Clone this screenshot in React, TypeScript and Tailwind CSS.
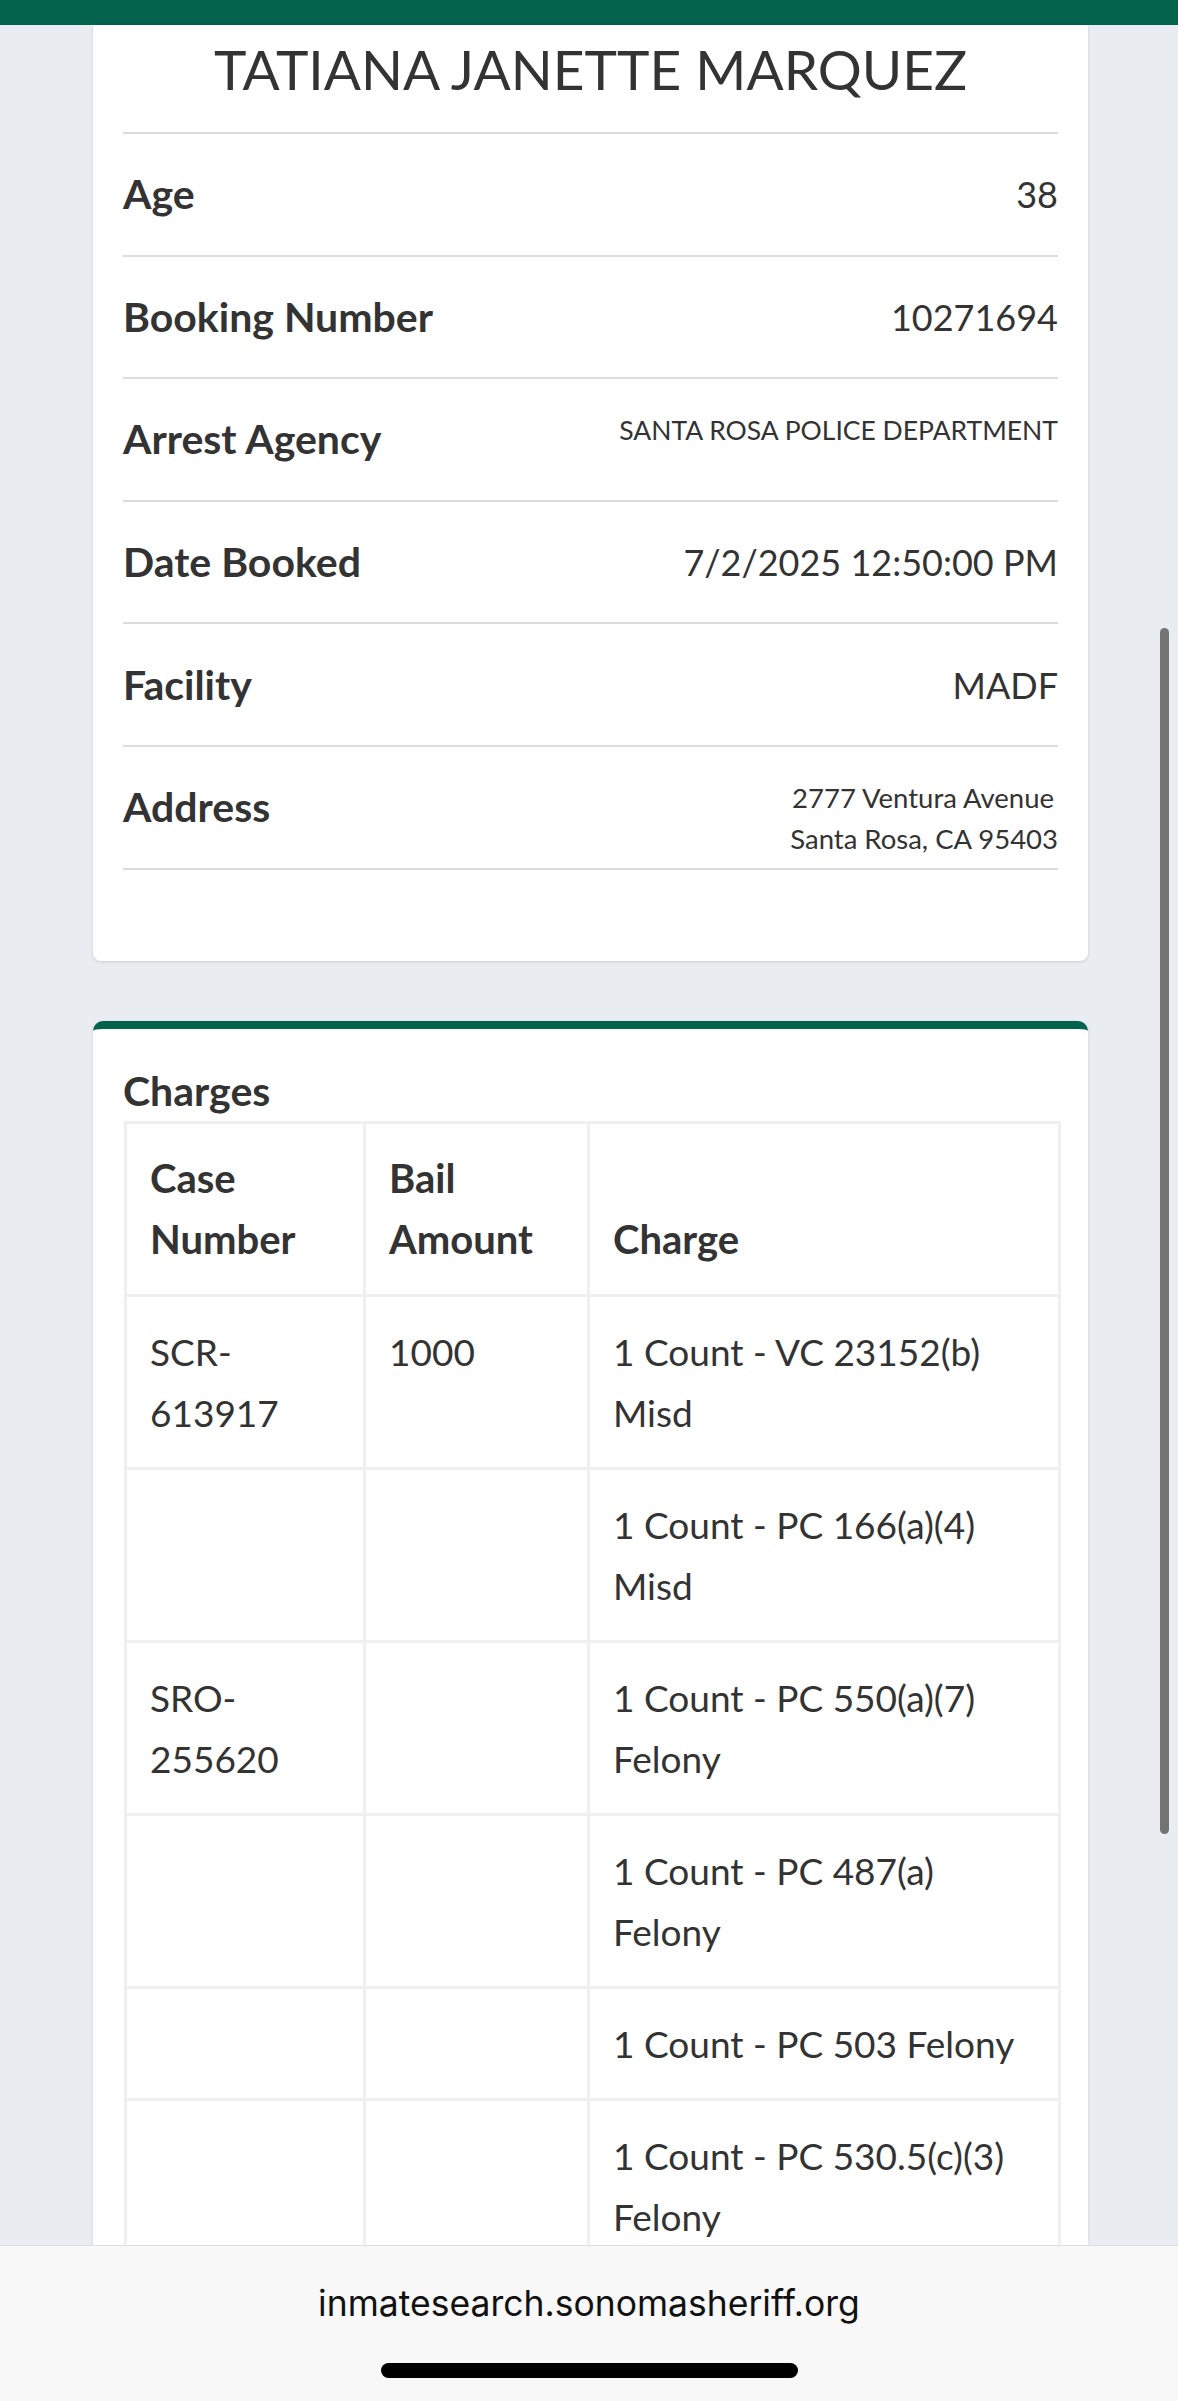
import React from "react";

type Row = { label: string; value: React.ReactNode; kind: "big" | "agency" | "address" };

const rows: Row[] = [
  { label: "Age", value: "38", kind: "big" },
  { label: "Booking Number", value: "10271694", kind: "big" },
  { label: "Arrest Agency", value: "SANTA ROSA POLICE DEPARTMENT", kind: "agency" },
  { label: "Date Booked", value: "7/2/2025 12:50:00 PM", kind: "big" },
  { label: "Facility", value: "MADF", kind: "big" },
  {
    label: "Address",
    kind: "address",
    value: (
      <>
        <div className="mr-[4px]">2777 Ventura Avenue</div>
        <div>Santa Rosa, CA 95403</div>
      </>
    ),
  },
];

const charges: [string, string, string][] = [
  ["SCR-613917", "1000", "1 Count - VC 23152(b) Misd"],
  ["", "", "1 Count - PC 166(a)(4) Misd"],
  ["SRO-255620", "", "1 Count - PC 550(a)(7) Felony"],
  ["", "", "1 Count - PC 487(a) Felony"],
  ["", "", "1 Count - PC 503 Felony"],
  ["", "", "1 Count - PC 530.5(c)(3) Felony"],
];

const valueClass: Record<Row["kind"], string> = {
  big: "text-right text-[36px] leading-[60px]",
  agency: "text-right text-[26.5px] leading-[40px] pt-[1px]",
  address: "text-right text-[27.5px] leading-[41px]",
};

const cellBase = "border-[3px] border-[#efefef] px-[23px] py-[24px] leading-[61px]";

export default function App() {
  return (
    <div className="relative h-[2401px] w-[1178px] overflow-hidden bg-[#e9edf2] font-[Lato,sans-serif] text-[#333333]">
      <div className="h-[25px] bg-[#03634d]" />

      {/* Inmate card */}
      <div className="ml-[93px] w-[995px] rounded-b-[8px] bg-white px-[30px] pt-[11px] pb-[91px] shadow-[0_1px_3px_rgba(0,0,0,0.14)]">
        <h1 className="mb-[30px] text-center text-[55px] leading-[66px] font-normal">
          TATIANA JANETTE MARQUEZ
        </h1>
        <div className="border-b-2 border-[#dcdcdc]">
          {rows.map((r) => (
            <div
              key={r.label}
              className="box-border flex h-[122.6px] items-start justify-between border-t-2 border-[#dcdcdc] pt-[30.3px]"
            >
              <div className="text-[41px] leading-[60px] font-bold">{r.label}</div>
              <div className={valueClass[r.kind]}>{r.value}</div>
            </div>
          ))}
        </div>
      </div>

      {/* Charges card */}
      <div className="mt-[60px] ml-[93px] w-[995px] rounded-t-[10px] border-t-[8px] border-[#03634d] bg-white px-[30px] pt-[32px] pb-[200px] shadow-[0_1px_3px_rgba(0,0,0,0.14)]">
        <h2 className="text-[41px] leading-[60px] font-bold">Charges</h2>
        <table className="ml-px w-[934px] table-fixed border-collapse text-left">
          <colgroup>
            <col className="w-[239px]" />
            <col className="w-[224px]" />
            <col className="w-[471px]" />
          </colgroup>
          <thead>
            <tr>
              <th className={`${cellBase} align-bottom text-[40px] font-bold`}>Case Number</th>
              <th className={`${cellBase} align-bottom text-[40px] font-bold`}>Bail Amount</th>
              <th className={`${cellBase} align-bottom text-[40px] font-bold`}>Charge</th>
            </tr>
          </thead>
          <tbody>
            {charges.map((c, i) => (
              <tr key={i}>
                <td className={`${cellBase} align-top text-[37px]`}>{c[0]}</td>
                <td className={`${cellBase} align-top text-[37px]`}>{c[1]}</td>
                <td className={`${cellBase} align-top text-[37px]`}>{c[2]}</td>
              </tr>
            ))}
          </tbody>
        </table>
      </div>

      {/* Scrollbar */}
      <div className="absolute left-[1160px] top-[628px] h-[1206px] w-[9px] rounded-full bg-[#737373]" />

      {/* Browser bottom bar */}
      <div className="absolute bottom-0 left-0 h-[156px] w-full border-t border-[#dedede] bg-[#f8f8f8] pt-[38px]">
        <div className="text-center font-[Inter,sans-serif] text-[35.5px] leading-[40px] text-[#111111]">
          inmatesearch.sonomasheriff.org
        </div>
        <div className="mx-auto mt-[39px] h-[15px] w-[417px] rounded-full bg-black" />
      </div>
    </div>
  );
}
